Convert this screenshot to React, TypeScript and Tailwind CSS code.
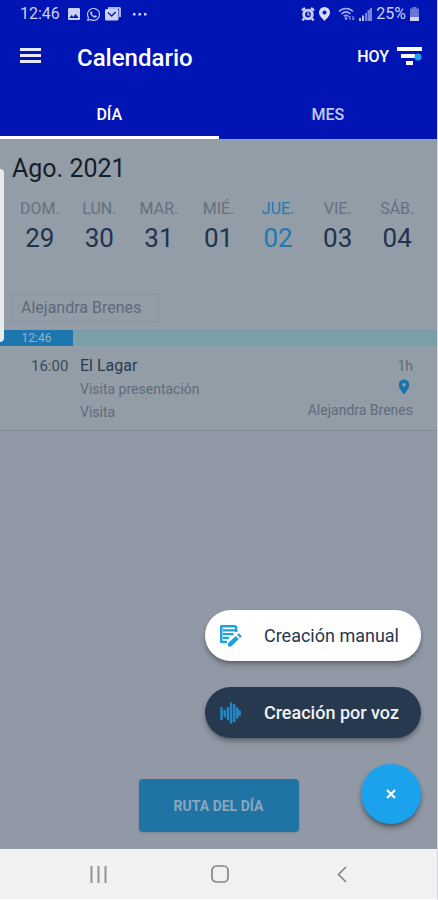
import { clsx } from "clsx";
import { FaWhatsapp } from "react-icons/fa";
import { MdImage, MdLocationOn } from "react-icons/md";

type Day = {
  name: string;
  number: string;
  selected?: boolean;
};

const days: Day[] = [
  { name: "DOM.", number: "29" },
  { name: "LUN.", number: "30" },
  { name: "MAR.", number: "31" },
  { name: "MIÉ.", number: "01" },
  { name: "JUE.", number: "02", selected: true },
  { name: "VIE.", number: "03" },
  { name: "SÁB.", number: "04" },
];

function MailIcon() {
  return (
    <svg viewBox="0 0 16 14" className="h-3.5 w-4" aria-hidden="true">
      <path d="M3 0h11.5A1.5 1.5 0 0 1 16 1.5V10h-2V2H3z" fill="#aab2ec" />
      <rect x="0" y="2" width="13.500" height="11.500" rx="1.500" fill="#ccd1f6" />
      <path d="M3 5.500l3.700 3.500 4-4" fill="none" stroke="#0516b4" strokeWidth="1.300" />
    </svg>
  );
}

function AlarmIcon() {
  return (
    <svg viewBox="0 0 14 14" className="size-3.5" fill="none" aria-hidden="true">
      <path d="M1 3.500L4 1M13 3.500L10 1M3 11.500l-1.500 2M11 11.500l1.500 2" stroke="#ccd1f6" strokeWidth="2.400" />
      <circle cx="7" cy="7.500" r="4.300" stroke="#ccd1f6" strokeWidth="2.800" />
      <path d="M7 5v3h2" stroke="#ccd1f6" strokeWidth="1.200" />
    </svg>
  );
}

function PinIcon() {
  return (
    <svg viewBox="0 0 11 14" className="h-3.5 w-[11px]" aria-hidden="true">
      <path
        d="M5.500 0A5.500 5.500 0 0 1 11 5.500C11 9 7.500 11.500 5.500 14 3.500 11.500 0 9 0 5.500A5.500 5.500 0 0 1 5.500 0zm0 3.500a2 2 0 1 0 0 4 2 2 0 0 0 0-4z"
        fill="#d8dcf9"
        fillRule="evenodd"
      />
    </svg>
  );
}

function WifiIcon() {
  return (
    <svg viewBox="0 0 17 14" className="h-3.5 w-[17px]" fill="none" aria-hidden="true">
      <path d="M1 4.500c4-4 10-4 14 0M3.500 7c2.700-2.500 6.300-2.500 9 0M5.800 9.300c1.400-1.200 3-1.200 4.400 0" stroke="#a4adeb" strokeWidth="1.600" />
      <circle cx="8" cy="11.500" r="1.300" fill="#a4adeb" />
      <path d="M12 13V9l-1.300 1.500M15 9v4l1.300-1.500" stroke="#a4adeb" />
    </svg>
  );
}

function SignalIcon() {
  return (
    <svg viewBox="0 0 13 13" className="size-[13px]" aria-hidden="true">
      <path d="M0 10h2v3H0zM3 7.500h2V13H3z" fill="#b9c0f0" />
      <path d="M6 5h2v8H6zM8.500 2H11v11H8.500zM11 0h2v13h-2z" fill="#7681da" />
    </svg>
  );
}

function BatteryIcon() {
  return (
    <svg viewBox="0 0 9 14" className="h-3.5 w-[9px]" aria-hidden="true">
      <path d="M2.500 0h4v1.500H9V14H0V1.500h2.500z" fill="#6974d5" />
      <path d="M0 10h9v4H0z" fill="#ccd1f6" />
    </svg>
  );
}

function FilterIcon() {
  return (
    <svg viewBox="0 0 25 18" className="h-[18px] w-[25px]" aria-hidden="true">
      <path d="M0 0h25v4H0zM4 7h14v4H4zM9 14h7v4H9z" fill="#fff" />
      <circle cx="21" cy="10" r="3.500" fill="#1ea3f0" />
    </svg>
  );
}

function NoteIcon() {
  return (
    <svg viewBox="0 0 22 22" className="size-[22px]" fill="none" aria-hidden="true">
      <path
        d="M7 17H1.300V1.300h13.400a1.500 1.500 0 0 1 1.500 1.500V7"
        stroke="#1d9fe3"
        strokeWidth="2.500"
        strokeLinejoin="round"
      />
      <path d="M3 5.300h12M3 9.100h10.500M3 12.900h6" stroke="#1d9fe3" strokeWidth="2.200" />
      <path d="M8 21.500v-3.200l7.800-7.300 3 3-7.600 7.500z" fill="#1d9fe3" />
      <path d="M17 9.800l1.700-1.600 3.200 3-1.800 1.700z" fill="#1d9fe3" />
    </svg>
  );
}

function VoiceIcon() {
  return (
    <svg viewBox="0 0 21 22" className="h-[22px] w-[21px]" aria-hidden="true">
      <path
        d="M1.500 6v11M4.700 9v5M7.900 6v11M11.100 1.500v19M14.300 3v16M17.300 6.500v9M19.700 9.500v3"
        stroke="#2487c6"
        strokeWidth="2.500"
        strokeLinecap="round"
      />
    </svg>
  );
}

function StatusBar() {
  return (
    <div className="flex h-7 items-center justify-between pr-[18px] pl-5 text-base text-[#ccd1f6]">
      <div className="flex items-center gap-1">
        <span className="mr-0.5">12:46</span>
        <MdImage className="size-4" />
        <FaWhatsapp className="size-[15px]" />
        <MailIcon />
        <svg viewBox="0 0 14 3" className="ml-2 h-[3px] w-3.5" fill="#ccd1f6" aria-hidden="true">
          <path d="M0 0h2.500v2.500H0zM5.500 0H8v2.500H5.500zM11 0h2.500v2.500H11z" />
        </svg>
      </div>
      <div className="flex items-center gap-1">
        <AlarmIcon />
        <PinIcon />
        <span className="ml-1">
          <WifiIcon />
        </span>
        <SignalIcon />
        <span>25%</span>
        <BatteryIcon />
      </div>
    </div>
  );
}

function Header() {
  return (
    <header className="bg-[#0015b4] text-white">
      <StatusBar />
      <div className="flex h-[58px] items-center pr-[15px] pl-5">
        <button type="button" aria-label="Abrir menú" className="pb-1">
          <svg viewBox="0 0 21 15" className="h-[15px] w-[21px]" aria-hidden="true">
            <path d="M0 0h21v3H0zM0 6h21v3H0zM0 12h21v3H0z" fill="#e6e9fb" />
          </svg>
        </button>
        <h1 className="ml-9 pt-0.5 text-2xl font-medium">Calendario</h1>
        <button type="button" className="ml-auto text-base font-medium">
          HOY
        </button>
        <button type="button" aria-label="Filtrar" className="ml-2 pb-0.5">
          <FilterIcon />
        </button>
      </div>
      <nav className="grid h-[53px] grid-cols-2 text-base font-medium">
        <button type="button" className="border-b-3 border-white pt-2">
          DÍA
        </button>
        <button type="button" className="border-b-3 border-transparent pt-2 text-[#c3caf5]">
          MES
        </button>
      </nav>
    </header>
  );
}

function Week() {
  return (
    <div className="grid grid-cols-7 px-[10px] pt-2.5">
      {days.map((day) => (
        <button
          key={day.number}
          type="button"
          className={clsx(
            "flex flex-col items-center",
            day.selected ? "text-[#2079b0]" : "text-[#1f334d]",
          )}
        >
          <span className={clsx("text-base leading-6", !day.selected && "text-[#64707f]")}>
            {day.name}
          </span>
          <span className="text-[26px] leading-[34px]">{day.number}</span>
        </button>
      ))}
    </div>
  );
}

function Visit() {
  return (
    <article className="flex h-[85px] border-b border-[#818b98] pt-2 pr-6 pl-[31px] text-sm text-[#5f6b7b]">
      <time className="w-[49px] text-[15px] leading-6 text-[#3b495b]">16:00</time>
      <div>
        <h2 className="text-base leading-6 text-[#2a3b50]">El Lagar</h2>
        <p className="leading-[22px]">Visita presentación</p>
        <p className="leading-6">Visita</p>
      </div>
      <div className="ml-auto flex flex-col items-end">
        <span className="leading-6">1h</span>
        <MdLocationOn className="mb-1 size-[18px] text-[#1b71ab]" />
        <span className="leading-5">Alejandra Brenes</span>
      </div>
    </article>
  );
}

function QuickActions() {
  return (
    <div className="absolute right-4 bottom-[25px] flex flex-col items-end gap-[26px]">
      <button
        type="button"
        className="flex h-[51px] w-54 items-center justify-between rounded-full bg-white pr-[22px] pl-[15px] text-lg text-[#26364b] shadow-md shadow-black/30"
      >
        <NoteIcon />
        Creación manual
      </button>
      <button
        type="button"
        className="flex h-[51px] w-54 items-center justify-between rounded-full bg-[#26394f] pr-[22px] pl-[15px] text-lg font-medium text-[#eef1f6] shadow-md shadow-black/30"
      >
        <VoiceIcon />
        Creación por voz
      </button>
      <button
        type="button"
        aria-label="Cerrar"
        className="flex size-15 items-center justify-center rounded-full bg-[#1aa3ec] shadow-md shadow-black/40"
      >
        <svg viewBox="0 0 10 10" className="size-2.5" aria-hidden="true">
          <path d="M1 1l8 8M9 1L1 9" stroke="#fff" strokeWidth="2.200" />
        </svg>
      </button>
    </div>
  );
}

function SystemNav() {
  return (
    <nav className="grid h-[51px] grid-cols-3 place-items-center border-b border-white bg-[#f1f1f1] px-9">
      <button type="button" aria-label="Recientes" className="pl-1">
        <svg viewBox="0 0 17 17" className="size-[17px]" aria-hidden="true">
          <path d="M1.500 0v17M8.500 0v17M15.500 0v17" stroke="#939393" strokeWidth="2" />
        </svg>
      </button>
      <button type="button" aria-label="Inicio" className="pl-1">
        <svg viewBox="0 0 18 18" className="size-[18px]" fill="none" aria-hidden="true">
          <rect x="1" y="1" width="16" height="16" rx="4.500" stroke="#858585" strokeWidth="1.700" />
        </svg>
      </button>
      <button type="button" aria-label="Atrás" className="pl-1">
        <svg viewBox="0 0 10 17" className="h-[17px] w-2.5" fill="none" aria-hidden="true">
          <path d="M9 1L1.500 8.500 9 16" stroke="#858585" strokeWidth="1.700" />
        </svg>
      </button>
    </nav>
  );
}

export default function App() {
  return (
    <div className="flex min-h-screen flex-col border-r border-[#d3d7e4] bg-[#9199a6] font-['Roboto',sans-serif]">
      <Header />
      <main className="relative flex grow flex-col">
        <section className="bg-[#939da8]">
          <p className="px-3 pt-3 text-[25px] leading-9 text-[#161d28]">Ago. 2021</p>
          <Week />
          <div className="mt-[39px] px-3">
            <button
              type="button"
              className="h-7 w-[147px] border border-[#89939f] pl-2 text-left text-base leading-6 text-[#5d6979]"
            >
              Alejandra Brenes
            </button>
          </div>
          <div className="mt-2 flex h-4 bg-[#7b9fa8]">
            <span className="w-[73px] bg-[#1d76ae] text-center text-xs leading-4 text-[#93b4cb]">
              12:46
            </span>
          </div>
          <Visit />
        </section>
        <button
          type="button"
          className="mx-auto mt-auto mb-[17px] h-[53px] w-40 rounded-sm bg-[#2073a5] text-sm font-bold text-[#8ba6bb] shadow"
        >
          RUTA DEL DÍA
        </button>
        <div className="absolute top-[30px] left-0 h-[173px] w-1 rounded-r-sm bg-[#e6ebec]" />
        <QuickActions />
      </main>
      <SystemNav />
    </div>
  );
}
